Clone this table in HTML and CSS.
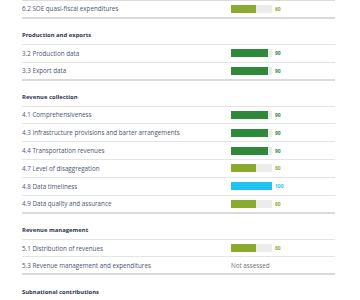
FILE: index.html
```html
<!DOCTYPE html>
<html lang="en">
<head>
<meta charset="utf-8">
<title>Indicator scores</title>
<link rel="stylesheet" href="styles.css">
</head>
<body>
<div class="table">
  <div class="edge"></div>
  <div class="row last">
    <span class="label">6.2 SOE quasi-fiscal expenditures</span>
    <span class="track"><span class="fill olive" style="width:60%"></span></span>
    <span class="score olive-t">60</span>
  </div>

  <div class="heading">Production and exports</div>
  <div class="row">
    <span class="label">3.2 Production data</span>
    <span class="track"><span class="fill green" style="width:90%"></span></span>
    <span class="score green-t">90</span>
  </div>
  <div class="row last">
    <span class="label">3.3 Export data</span>
    <span class="track"><span class="fill green" style="width:90%"></span></span>
    <span class="score green-t">90</span>
  </div>

  <div class="heading">Revenue collection</div>
  <div class="row">
    <span class="label">4.1 Comprehensiveness</span>
    <span class="track"><span class="fill green" style="width:90%"></span></span>
    <span class="score green-t">90</span>
  </div>
  <div class="row">
    <span class="label">4.3 Infrastructure provisions and barter arrangements</span>
    <span class="track"><span class="fill green" style="width:90%"></span></span>
    <span class="score green-t">90</span>
  </div>
  <div class="row">
    <span class="label">4.4 Transportation revenues</span>
    <span class="track"><span class="fill green" style="width:90%"></span></span>
    <span class="score green-t">90</span>
  </div>
  <div class="row">
    <span class="label">4.7 Level of disaggregation</span>
    <span class="track"><span class="fill olive" style="width:60%"></span></span>
    <span class="score olive-t">60</span>
  </div>
  <div class="row">
    <span class="label">4.8 Data timeliness</span>
    <span class="track"><span class="fill blue" style="width:100%"></span></span>
    <span class="score blue-t">100</span>
  </div>
  <div class="row last">
    <span class="label">4.9 Data quality and assurance</span>
    <span class="track"><span class="fill olive" style="width:60%"></span></span>
    <span class="score olive-t">60</span>
  </div>

  <div class="heading">Revenue management</div>
  <div class="row">
    <span class="label">5.1 Distribution of revenues</span>
    <span class="track"><span class="fill olive" style="width:60%"></span></span>
    <span class="score olive-t">60</span>
  </div>
  <div class="row last">
    <span class="label">5.3 Revenue management and expenditures</span>
    <span class="na">Not assessed</span>
  </div>

  <div class="heading">Subnational contributions</div>
</div>
</body>
</html>
```
FILE: styles.css
```css
html, body {
  margin: 0;
  padding: 0;
  background: #ffffff;
}

body {
  font-family: "Open Sans", "Liberation Sans", sans-serif;
  color: #3f4866;
}

.table {
  width: 313px;
  margin-left: 22px;
}

.edge {
  height: 1px;
  background: #dcdcdc;
}

.row {
  box-sizing: border-box;
  height: 17.85px;
  display: grid;
  grid-template-columns: 206px 41px auto;
  column-gap: 3px;
  align-items: center;
  border-bottom: 1px solid #e4e4e4;
  font-size: 6.25px;
}

.row.last {
  border-bottom: 2px solid #dadada;
}

.label {
  white-space: nowrap;
  color: #4a5472;
}

.track {
  display: block;
  height: 8px;
  background: #ececec;
}

.fill {
  display: block;
  height: 100%;
}

.green { background: #2e8a3a; }
.olive { background: #8aab2f; }
.blue { background: #1ec4ee; }

.score {
  font-size: 5px;
  font-weight: 700;
}

.green-t { color: #2e8a3a; }
.olive-t { color: #8aab2f; }
.blue-t { color: #1ec4ee; }

.na {
  grid-column: 2 / 4;
  color: #6f6f6f;
  white-space: nowrap;
}

.heading {
  box-sizing: border-box;
  height: 26px;
  padding-top: 12.5px;
  border-bottom: 1px solid #e4e4e4;
  font-size: 5.9px;
  font-weight: 700;
  color: #2c3452;
  line-height: 8px;
}

.heading:last-child {
  border-bottom: none;
  padding-top: 12.5px;
}
```
